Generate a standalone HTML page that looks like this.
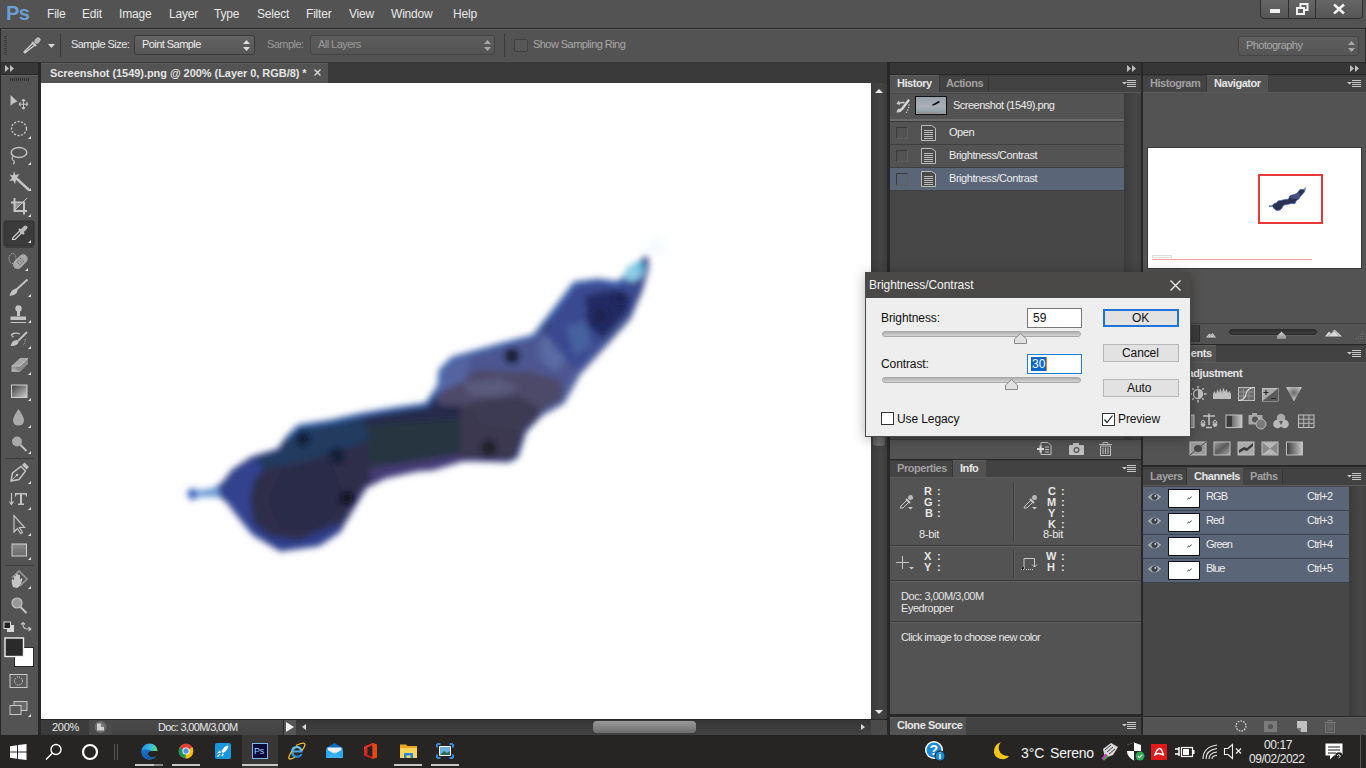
<!DOCTYPE html>
<html><head><meta charset="utf-8">
<style>
*{margin:0;padding:0;box-sizing:border-box}
html,body{width:1366px;height:768px;overflow:hidden;background:#535353;font-family:"Liberation Sans",sans-serif}
.a{position:absolute}
.t{position:absolute;white-space:nowrap;line-height:1;font-size:11px;color:#e4e4e4;letter-spacing:-0.55px}
.ic{position:absolute;overflow:visible}
</style></head><body>

<!-- MENU BAR -->
<div class="a" style="left:0;top:0;width:1366px;height:28px;background:#535353"></div>
<div class="t" style="left:6px;top:3px;font-size:20px;font-weight:bold;color:#6a9fd4;letter-spacing:-0.5px">Ps</div>
<div class="t" style="left:47px;top:8px;font-size:12px;color:#e8e8e8;letter-spacing:-0.2px">File</div>
<div class="t" style="left:82px;top:8px;font-size:12px;color:#e8e8e8;letter-spacing:-0.2px">Edit</div>
<div class="t" style="left:119px;top:8px;font-size:12px;color:#e8e8e8;letter-spacing:-0.2px">Image</div>
<div class="t" style="left:169px;top:8px;font-size:12px;color:#e8e8e8;letter-spacing:-0.2px">Layer</div>
<div class="t" style="left:214px;top:8px;font-size:12px;color:#e8e8e8;letter-spacing:-0.2px">Type</div>
<div class="t" style="left:257px;top:8px;font-size:12px;color:#e8e8e8;letter-spacing:-0.2px">Select</div>
<div class="t" style="left:306px;top:8px;font-size:12px;color:#e8e8e8;letter-spacing:-0.2px">Filter</div>
<div class="t" style="left:349px;top:8px;font-size:12px;color:#e8e8e8;letter-spacing:-0.2px">View</div>
<div class="t" style="left:391px;top:8px;font-size:12px;color:#e8e8e8;letter-spacing:-0.2px">Window</div>
<div class="t" style="left:453px;top:8px;font-size:12px;color:#e8e8e8;letter-spacing:-0.2px">Help</div>
<!-- window controls -->
<div class="a" style="left:1260px;top:-2px;width:103px;height:21px;border:1px solid #2e2e2e;border-radius:0 0 4px 4px;background:linear-gradient(#666,#565656)"></div>
<div class="a" style="left:1288px;top:0;width:1px;height:18px;background:#2e2e2e"></div>
<div class="a" style="left:1315px;top:0;width:1px;height:18px;background:#2e2e2e"></div>
<div class="a" style="left:1270px;top:9px;width:10px;height:4px;background:#f0f0f0"></div>
<svg class="ic" style="left:1296px;top:3px" width="13" height="12"><rect x="4.5" y="1" width="7" height="6" fill="none" stroke="#f0f0f0" stroke-width="2"/><rect x="1" y="5" width="7" height="6" fill="#5e5e5e" stroke="#f0f0f0" stroke-width="2"/></svg>
<svg class="ic" style="left:1333px;top:4px" width="12" height="10"><path d="M1 0.5L11 9.5M11 0.5L1 9.5" stroke="#f0f0f0" stroke-width="2.4"/></svg>

<!-- OPTIONS BAR -->
<div class="a" style="left:0;top:28px;width:1366px;height:1px;background:#2a2a2a"></div>
<div class="a" style="left:1px;top:29px;width:1364px;height:33px;background:#535353;border-top:1px solid #5e5e5e"></div>
<div class="a" style="left:0;top:62px;width:1366px;height:1px;background:#2a2a2a"></div>
<div class="a" style="left:0;top:28px;width:1px;height:35px;background:#2a2a2a"></div><div class="a" style="left:1365px;top:28px;width:1px;height:35px;background:#2a2a2a"></div>
<!-- grip -->
<div class="a" style="left:4px;top:36px;width:3px;height:20px;background:repeating-linear-gradient(#3a3a3a 0 1px,transparent 1px 2px)"></div>
<!-- eyedropper icon -->
<svg class="ic" style="left:22px;top:35px" width="20" height="20"><path d="M4 17 L3 18 L2 17 L3 16 L11 8 L13 10 Z" fill="none" stroke="#d8d8d8" stroke-width="1.2"/><path d="M10 7 L14 11" stroke="#c8c8c8" stroke-width="2.2"/><rect x="13" y="2" width="5" height="7" rx="2.5" transform="rotate(45 15.5 5.5)" fill="#b8b8b8"/></svg>
<svg class="ic" style="left:48px;top:44px" width="7" height="4"><path d="M0 0H7L3.5 4Z" fill="#d8d8d8"/></svg>
<div class="a" style="left:60px;top:34px;width:1px;height:23px;background:#3a3a3a"></div>
<div class="t" style="left:71px;top:39px;color:#e8e8e8">Sample Size:</div>
<div class="a" style="left:134px;top:35px;width:121px;height:20px;border:1px solid #3a3a3a;border-radius:3px;background:linear-gradient(#636363,#565656)"></div>
<div class="t" style="left:142px;top:39px;color:#ececec">Point Sample</div>
<svg class="ic" style="left:243px;top:40px" width="7" height="11"><path d="M0 4L3.5 0L7 4ZM0 7L3.5 11L7 7Z" fill="#dcdcdc"/></svg>
<div class="t" style="left:267px;top:39px;color:#9a9a9a">Sample:</div>
<div class="a" style="left:310px;top:35px;width:185px;height:20px;border:1px solid #444;border-radius:3px;background:linear-gradient(#5c5c5c,#545454)"></div>
<div class="t" style="left:318px;top:39px;color:#9a9a9a">All Layers</div>
<svg class="ic" style="left:484px;top:40px" width="7" height="11"><path d="M0 4L3.5 0L7 4ZM0 7L3.5 11L7 7Z" fill="#a8a8a8"/></svg>
<div class="a" style="left:504px;top:34px;width:1px;height:23px;background:#3a3a3a"></div>
<div class="a" style="left:514px;top:39px;width:14px;height:13px;border:1px solid #404040;border-radius:2px;background:#575757"></div>
<div class="t" style="left:533px;top:39px;color:#a8a8a8">Show Sampling Ring</div>
<div class="a" style="left:1238px;top:36px;width:121px;height:20px;border:1px solid #464646;border-radius:3px;background:linear-gradient(#5e5e5e,#555)"></div>
<div class="t" style="left:1246px;top:40px;color:#a8a8a8">Photography</div>
<svg class="ic" style="left:1348px;top:41px" width="7" height="11"><path d="M0 4L3.5 0L7 4ZM0 7L3.5 11L7 7Z" fill="#a8a8a8"/></svg>


<!-- TOOLBAR -->
<div class="a" style="left:0;top:62px;width:41px;height:674px;background:#282828"></div>
<div class="a" style="left:1px;top:63px;width:37px;height:11px;background:#383838"></div>
<svg class="ic" style="left:5px;top:65px" width="10" height="7"><path d="M0 0L4 3.5L0 7ZM5 0L9 3.5L5 7Z" fill="#c0c0c0"/></svg>
<div class="a" style="left:1px;top:75px;width:37px;height:660px;background:#535353;border-top:1px solid #5f5f5f"></div>
<div class="a" style="left:10px;top:78px;width:19px;height:3px;background:repeating-linear-gradient(90deg,#2f2f2f 0 1px,transparent 1px 2px)"></div>
<svg class="ic" style="left:0;top:0" width="41" height="736">
<!-- move -->
<path d="M10.5 95V106L13 103.5L17.5 101.5Z" fill="#c4c4c4"/>
<path d="M23.5 99.5V109M19 104.2H28M23.5 99.5L21.8 101.2M23.5 99.5L25.2 101.2M23.5 109L21.8 107.3M23.5 109L25.2 107.3M19 104.2L20.7 102.5M19 104.2L20.7 105.9M28 104.2L26.3 102.5M28 104.2L26.3 105.9" stroke="#c4c4c4" stroke-width="1.1" fill="none"/>
<!-- marquee -->
<ellipse cx="19" cy="128.5" rx="7.5" ry="7" fill="none" stroke="#c4c4c4" stroke-width="1.3" stroke-dasharray="2.2 1.4"/>
<path d="M31 136V139H28Z" fill="#e0e0e0"/>
<!-- lasso -->
<ellipse cx="19" cy="152.5" rx="7.8" ry="5" fill="none" stroke="#c4c4c4" stroke-width="1.4"/>
<path d="M13 156Q11 160 14 161Q15 163 13 164" stroke="#c4c4c4" stroke-width="1.2" fill="none"/>
<path d="M31 162V165H28Z" fill="#e0e0e0"/>
<!-- magic wand -->
<path d="M17 179L29 190" stroke="#c4c4c4" stroke-width="2.4"/>
<path d="M14 171L15.5 175L19.5 174L17 177.5L20 180L16 180L15 184L13 180.5L9 181L12 178L9.5 174.5L13 175.5Z" fill="#c4c4c4"/>
<path d="M31 188V191H28Z" fill="#e0e0e0"/>
<!-- crop -->
<path d="M14.5 198V211H27M11 202.5H24V214.5" stroke="#c4c4c4" stroke-width="2" fill="none"/>
<path d="M14 211L27 198" stroke="#c4c4c4" stroke-width="1"/>
<path d="M15 210V204H21Z" fill="#c4c4c4" opacity="0.6"/>
<path d="M31 214V217H28Z" fill="#e0e0e0"/>
<!-- eyedropper selected -->
<rect x="4" y="221" width="30" height="25" rx="2" fill="#3b3b3b" stroke="#2f2f2f"/>
<path d="M12.5 239.5L13 237.5L20 230.5L22 232.5L15 239.5Z" fill="none" stroke="#d4d4d4" stroke-width="1.2"/>
<path d="M19 229L24 234" stroke="#c8c8c8" stroke-width="2.2"/>
<path d="M21.5 231.5L25.5 227.5" stroke="#b8b8b8" stroke-width="4" stroke-linecap="round"/>
<path d="M31 240V243H28Z" fill="#e0e0e0"/>
<rect x="5" y="247" width="29" height="1" fill="#3c3c3c"/>
<!-- healing -->
<g transform="rotate(-45 20 262)"><rect x="12" y="257.5" width="17" height="9" rx="4.5" fill="#a8a8a8"/><path d="M18 259.5V264.5M20.5 259.5V264.5M23 259.5V264.5" stroke="#5a5a5a" stroke-width="1" stroke-dasharray="1 1"/></g>
<ellipse cx="12.5" cy="258.5" rx="3.5" ry="5" fill="none" stroke="#c4c4c4" stroke-width="1" stroke-dasharray="1 1"/>
<path d="M28 268V271H25Z" fill="#e0e0e0"/>
<!-- brush -->
<path d="M27.5 279.5L16 290" stroke="#c4c4c4" stroke-width="1.8"/>
<path d="M9.5 296Q11 289 16 288.5L17.5 290.5Q17 295 9.5 296Z" fill="#c4c4c4"/>
<path d="M31 294V297H28Z" fill="#e0e0e0"/>
<!-- stamp -->
<circle cx="18.5" cy="308.5" r="3.2" fill="#c4c4c4"/>
<path d="M17 311H20V316H17Z" fill="#c4c4c4"/>
<path d="M10.5 316.5H26V320H10.5Z" fill="#c4c4c4"/>
<path d="M10.5 322.5H26" stroke="#c4c4c4" stroke-width="1"/>
<path d="M31 320V323H28Z" fill="#e0e0e0"/>
<!-- history brush -->
<path d="M27 332L18 341" stroke="#c4c4c4" stroke-width="1.8"/>
<path d="M10.5 346Q12 340 17 340L18.5 342Q18 346 10.5 346Z" fill="#c4c4c4"/>
<path d="M11 335Q15 332 20 334M11 335L14 333M11 335L13.5 337" stroke="#c4c4c4" stroke-width="1.2" fill="none"/>
<path d="M25 339Q26 342 23 345" stroke="#c4c4c4" stroke-width="1" stroke-dasharray="1 1" fill="none"/>
<path d="M31 346V349H28Z" fill="#e0e0e0"/>
<!-- eraser -->
<path d="M11.5 366L20 358H28L20 366V372H11.5Z" fill="#a8a8a8"/>
<path d="M11.5 366H20L28 358V364L20 372" fill="#8a8a8a"/>
<path d="M12 366H20L28 358" stroke="#d0d0d0" stroke-width="0.8" fill="none"/>
<path d="M31 372V375H28Z" fill="#e0e0e0"/>
<!-- gradient -->
<defs><linearGradient id="tg" x1="0" y1="0" x2="1" y2="1"><stop offset="0" stop-color="#3a3a3a"/><stop offset="1" stop-color="#d0d0d0"/></linearGradient>
<linearGradient id="tr" x1="0" y1="0" x2="0" y2="1"><stop offset="0" stop-color="#9a9a9a"/><stop offset="1" stop-color="#6a6a6a"/></linearGradient></defs>
<rect x="11.5" y="385" width="15.5" height="12.5" fill="url(#tg)" stroke="#d0d0d0" stroke-width="1"/>
<path d="M31 398V401H28Z" fill="#e0e0e0"/>
<!-- blur drop -->
<path d="M18.5 409Q13 417 13 420Q13 425.5 18.5 425.5Q24 425.5 24 420Q24 417 18.5 409Z" fill="#aaa"/>
<path d="M31 425V428H28Z" fill="#e0e0e0"/>
<!-- dodge -->
<circle cx="17" cy="441.5" r="5" fill="#a8a8a8"/>
<path d="M20.5 445L26.5 451" stroke="#c4c4c4" stroke-width="1.8"/>
<path d="M31 451V454H28Z" fill="#e0e0e0"/>
<rect x="5" y="458" width="29" height="1" fill="#3c3c3c"/>
<!-- pen -->
<path d="M11 481L12.5 473L21 466.5L25.5 471L19 479.5Z" fill="none" stroke="#c4c4c4" stroke-width="1.4"/>
<path d="M22 465L24.5 462.5L29 467L26.5 469.5Z" fill="#c4c4c4"/>
<circle cx="17" cy="475" r="1.3" fill="#c4c4c4"/>
<path d="M11 481L17 475" stroke="#c4c4c4" stroke-width="0.9"/>
<path d="M31 481V484H28Z" fill="#e0e0e0"/>
<!-- type -->
<path d="M11.5 493V504M9.5 501.5L11.5 504.5L13.5 501.5" stroke="#c4c4c4" stroke-width="1.1" fill="none"/>
<path d="M15 493H27V496.5H26L25.5 494.5H22V503.5H24V505H18V503.5H20V494.5H16.5L16 496.5H15Z" fill="#c4c4c4"/>
<path d="M31 507V510H28Z" fill="#e0e0e0"/>
<!-- path selection -->
<path d="M14 515.5V532L17.5 528.5L20.5 533.5L22.5 532.5L19.5 527.5H24.5Z" fill="none" stroke="#c4c4c4" stroke-width="1.2"/>
<path d="M31 533V536H28Z" fill="#e0e0e0"/>
<!-- rectangle -->
<defs><linearGradient id="rr" x1="0" y1="0" x2="0" y2="1"><stop offset="0" stop-color="#8a8a8a"/><stop offset="1" stop-color="#6a6a6a"/></linearGradient></defs>
<rect x="12" y="544" width="14.5" height="12" fill="url(#rr)" stroke="#cfcfcf" stroke-width="1"/>
<path d="M31 557V560H28Z" fill="#e0e0e0"/>
<rect x="5" y="565" width="29" height="1" fill="#3c3c3c"/>
<!-- hand rotate -->
<path d="M12 578L19 571L27 579L20 586" fill="none" stroke="#999" stroke-width="1.6"/>
<path d="M13 587Q11 582 12 579L14 580V576.5Q15 575 16 576.5V580V574.5Q17 573 18 574.5V579.5V575Q19 574 20 575V580L21 578Q23 578 22 581Q20 587 17 588Z" fill="#c4c4c4"/>
<path d="M31 586V589H28Z" fill="#e0e0e0"/>
<!-- zoom -->
<circle cx="17" cy="603" r="5" fill="#999" stroke="#c4c4c4" stroke-width="1.2"/>
<path d="M20.5 607L26.5 613" stroke="#c4c4c4" stroke-width="2"/>
<!-- default colors -->
<rect x="7" y="625" width="7" height="7" fill="#d8d8d8"/>
<rect x="4" y="622" width="6.5" height="6.5" fill="#222" stroke="#d8d8d8" stroke-width="1"/>
<path d="M23 622.5V625Q23 629 28.5 629H31M28.5 627L31 629L28.5 631M23 622.5L21 624.5M23 622.5L25 624.5" stroke="#c4c4c4" stroke-width="1.1" fill="none"/>
<!-- fg/bg -->
<rect x="14.5" y="647.5" width="19" height="19" fill="#fff" stroke="#2a2a2a" stroke-width="1"/>
<rect x="5" y="638" width="18.5" height="18.5" fill="#2a2a2a" stroke="#f0f0f0" stroke-width="1.4"/>
<!-- quick mask -->
<rect x="10" y="674.5" width="17" height="13" fill="#5a5a5a" stroke="#c8c8c8" stroke-width="1"/>
<circle cx="18.5" cy="681" r="4" fill="none" stroke="#e8e8e8" stroke-width="1" stroke-dasharray="1 1.1"/>
<!-- screen mode -->
<rect x="14" y="701.5" width="13" height="9" fill="#6a6a6a" stroke="#c8c8c8" stroke-width="1"/>
<rect x="10" y="705.5" width="11" height="9" fill="#5a5a5a" stroke="#c8c8c8" stroke-width="1"/>
<path d="M31 714V717H28Z" fill="#e0e0e0"/>
</svg>

<!-- DOCUMENT AREA -->
<div class="a" style="left:41px;top:62px;width:846px;height:21px;background:#3a3a3a"></div>
<div class="a" style="left:41px;top:63px;width:287px;height:20px;background:#535353;border-top:1px solid #5e5e5e"></div>
<div class="t" style="left:50px;top:68px;font-weight:bold;color:#e4e4e4;letter-spacing:-0.05px">Screenshot (1549).png @ 200% (Layer 0, RGB/8) *</div>
<svg class="ic" style="left:314px;top:69px" width="7" height="7"><path d="M0.5 0.5L6.5 6.5M6.5 0.5L0.5 6.5" stroke="#d8d8d8" stroke-width="1.4"/></svg>
<div class="a" style="left:41px;top:83px;width:830px;height:636px;background:#fff"></div>
<svg class="ic" style="left:0;top:0" width="887" height="719" viewBox="0 0 887 719">
<defs>
<filter id="bl" x="-20%" y="-20%" width="140%" height="140%"><feGaussianBlur stdDeviation="3"/></filter>
<filter id="bl2" x="-50%" y="-50%" width="200%" height="200%"><feGaussianBlur stdDeviation="3"/></filter>
<filter id="bl3" x="-50%" y="-50%" width="200%" height="200%"><feGaussianBlur stdDeviation="6"/></filter>
<clipPath id="cv"><rect x="41" y="83" width="830" height="636"/></clipPath>
<clipPath id="ol"><path d="M214 491 L224 484 L234 471 L252 459 L279 451 L289 437 L299 427 L331 422 L363 415 L393 410 L427 405 L440 386 L441 371 L453 359 L503 345 L534 337 L556 309 L575 284 L598 281 L619 284 L631 271 L641 263 L646 259 L646 268 L640 290 L628 318 L610 338 L578 373 L562 402 L540 414 L524 431 L516 456 L508 460 L478 459 L462 459 L432 468 L417 469 L385 476 L365 486 L348 514 L338 531 L318 544 L281 549 L254 533 L244 521 L227 499 Z"/></clipPath>
</defs>
<g clip-path="url(#cv)">
<g filter="url(#bl)">
<path d="M214 491 L224 484 L234 471 L252 459 L279 451 L289 437 L299 427 L331 422 L363 415 L393 410 L427 405 L440 386 L441 371 L453 359 L503 345 L534 337 L556 309 L575 284 L598 281 L619 284 L631 271 L641 263 L646 259 L646 268 L640 290 L628 318 L610 338 L578 373 L562 402 L540 414 L524 431 L516 456 L508 460 L478 459 L462 459 L432 468 L417 469 L385 476 L365 486 L348 514 L338 531 L318 544 L281 549 L254 533 L244 521 L227 499 Z" fill="#34407a" stroke="#364488" stroke-width="5" stroke-linejoin="round"/>
<path d="M214 491 L224 484 L234 471 L252 459 L279 451 L289 437 L299 427 L331 422 L363 415 L393 410 L427 405 L440 386 L441 371 L453 359 L503 345 L534 337 L556 309 L575 284 L598 281 L619 284 L631 271 L641 263 L646 259 L646 268 L640 290 L628 318 L610 338 L578 373 L562 402 L540 414 L524 431 L516 456 L508 460 L478 459 L462 459 L432 468 L417 469 L385 476 L365 486 L348 514 L338 531 L318 544 L281 549 L254 533 L244 521 L227 499 Z" fill="#2f2d4b"/>
<g clip-path="url(#ol)">
<!-- left fringe of lower lobe -->
<path d="M205 495 L234 466 L262 452 L290 446 L292 456 L266 466 L254 480 L250 500 L254 525 L240 525 Z" fill="#31438e"/>
<!-- lower-left lobe: teal upper portion -->
<path d="M254 458 L280 447 L292 430 L336 418 L368 410 L370 440 L336 452 L300 462 L264 468 Z" fill="#213b5e"/>
<path d="M250 520 L270 536 L300 540 L340 522 L330 560 L260 560 L236 530 Z" fill="#2d3d86"/>
<path d="M282 470 L330 460 L346 500 L320 530 L280 530 L268 500 Z" fill="#2c2b48"/>
<!-- middle band -->
<path d="M364 400 L462 396 L464 460 L372 478 Z" fill="#283640"/>
<path d="M364 404 L462 398 L462 418 L364 425 Z" fill="#262b4b"/>
<path d="M370 468 L462 454 L470 470 L372 490 Z" fill="#443a72"/>
<!-- right of middle -->
<path d="M460 398 L550 398 L548 410 L530 420 L520 440 L516 470 L460 470 Z" fill="#3b3850"/>
<!-- upper band -->
<path d="M436 395 L440 360 L500 340 L540 330 L572 336 L580 372 L566 402 L546 414 L500 405 L440 405 Z" fill="#4d5690"/>
<path d="M440 388 L480 370 L530 372 L560 380 L566 402 L546 414 L500 405 L440 405 Z" fill="#4e4868"/>
<path d="M462 382 L500 378 L520 388 L500 396 L470 396 Z" fill="#5a5a7c"/>
<path d="M440 366 L470 354 L466 380 L440 392 Z" fill="#5563a0"/>
<path d="M540 340 L560 330 L572 352 L556 372 L540 360 Z" fill="#5a6aa2"/>
<path d="M470 402 L520 396 L546 412 L524 432 L480 424 Z" fill="#3e3a52"/>
<!-- upper right lobe -->
<path d="M550 320 L575 280 L620 280 L650 255 L650 300 L628 318 L600 344 L578 372 L560 352 L545 334 Z" fill="#3a4890"/>
<path d="M585 296 L612 290 L630 296 L626 322 L604 340 L588 326 Z" fill="#232a62"/>
<path d="M566 326 L586 322 L592 346 L574 356 Z" fill="#46609e"/>
</g>
<!-- fringe strokes -->
<path d="M289 437 L299 427 L331 422 L363 415 L393 410 L427 405 L440 386 L441 371 L453 359 L503 345 L534 337 L556 309 L575 284 L598 281 L619 284 L631 271" fill="none" stroke="#3a72c0" stroke-width="2.5"/>
<path d="M628 315 L603 343 L575 374 L562 402 L540 414" fill="none" stroke="#5a74b8" stroke-width="2"/>
<path d="M227 499 L244 521 L254 533 L281 549 L318 544 L338 531" fill="none" stroke="#304a9c" stroke-width="2.5"/>
<path d="M348 514 L365 486 L385 476 L417 469 L432 468 L462 459 L478 459 L508 460" fill="none" stroke="#4a3c7a" stroke-width="2"/>
<circle cx="193" cy="494" r="5.5" fill="#3a5cb8"/>
<path d="M196 491 L218 487 L220 497 L196 497 Z" fill="#6a9ad8"/>
<!-- tip -->
<ellipse cx="634" cy="272" rx="11" ry="8" transform="rotate(-40 634 272)" fill="#8ccde6"/>
<ellipse cx="640" cy="266" rx="4.5" ry="4" fill="#58b4e0"/>
</g>
<g filter="url(#bl2)">
<circle cx="303" cy="439" r="6" fill="#0c1830"/>
<circle cx="337" cy="456" r="7" fill="#101a34"/>
<circle cx="347" cy="498" r="6" fill="#0a0a1c"/>
<circle cx="512" cy="356" r="7" fill="#181c30"/>
<circle cx="489" cy="448" r="7" fill="#1c1c28"/>
<circle cx="600" cy="316" r="7" fill="#1a2050"/>
<circle cx="620" cy="298" r="5" fill="#1a2050"/>
</g>
<g filter="url(#bl3)">
<ellipse cx="656" cy="246" rx="9" ry="4" transform="rotate(-45 656 246)" fill="#c8e8f4" opacity="0.45"/>
</g>
</g>
</svg>
<!-- vertical scrollbar -->
<div class="a" style="left:871px;top:83px;width:16px;height:636px;background:linear-gradient(90deg,#3a3a3a,#454545 60%,#3c3c3c)"></div>
<svg class="ic" style="left:875px;top:89px" width="8" height="4"><path d="M0 4L4 0L8 4Z" fill="#e8e8e8"/></svg>
<div class="a" style="left:873px;top:300px;width:12px;height:146px;border-radius:3px;background:linear-gradient(90deg,#5a5a5a,#707070 50%,#5e5e5e)"></div>
<svg class="ic" style="left:875px;top:710px" width="8" height="4"><path d="M0 0H8L4 4Z" fill="#e8e8e8"/></svg>
<!-- status bar -->
<div class="a" style="left:41px;top:719px;width:846px;height:16px;background:#262626"></div>
<div class="a" style="left:41px;top:720px;width:48px;height:15px;background:#3c3c3c"></div>
<div class="t" style="left:52px;top:722px;color:#e8e8e8;letter-spacing:-0.3px">200%</div>
<div class="a" style="left:89px;top:720px;width:23px;height:15px;background:#4a4a4a"></div>
<svg class="ic" style="left:94px;top:721px" width="13" height="12"><circle cx="6.5" cy="6" r="6" fill="#6a6a6a"/><path d="M3 2.5H7L10 6V9.5H3Z" fill="#d0d0d0"/><path d="M7 2.5V6H10" fill="#7a7a7a"/></svg>
<div class="a" style="left:112px;top:720px;width:171px;height:15px;background:linear-gradient(#4a4a4a,#424242)"></div>
<div class="t" style="left:158px;top:722px;color:#e8e8e8;letter-spacing:-0.65px">Doc: 3,00M/3,00M</div>
<div class="a" style="left:284px;top:720px;width:12px;height:15px;background:#565656"></div>
<svg class="ic" style="left:286px;top:722px" width="8" height="10"><path d="M0 0L8 5L0 10Z" fill="#f0f0f0"/></svg>
<div class="a" style="left:296px;top:720px;width:575px;height:15px;background:linear-gradient(#363636,#424242)"></div>
<svg class="ic" style="left:302px;top:724px" width="4" height="6"><path d="M4 0V6L0 3Z" fill="#d8d8d8"/></svg>
<div class="a" style="left:593px;top:721px;width:103px;height:12px;border-radius:4px;background:linear-gradient(#9a9a9a,#6c6c6c)"></div>
<svg class="ic" style="left:861px;top:724px" width="4" height="6"><path d="M0 0V6L4 3Z" fill="#d8d8d8"/></svg>
<div class="a" style="left:871px;top:720px;width:16px;height:15px;background:#4a4a4a"></div>
<div class="a" style="left:887px;top:62px;width:3px;height:674px;background:#282828"></div>


<!-- RIGHT COLUMN 1 -->
<div class="a" style="left:890px;top:62px;width:476px;height:674px;background:#282828"></div>
<div class="a" style="left:890px;top:63px;width:251px;height:11px;background:#363636"></div>
<svg class="ic" style="left:1127px;top:65px" width="10" height="7"><path d="M0 0L4 3.5L0 7ZM5 0L9 3.5L5 7Z" fill="#bdbdbd"/></svg>
<div class="a" style="left:1143px;top:63px;width:223px;height:11px;background:#363636"></div>
<svg class="ic" style="left:1350px;top:65px" width="10" height="7"><path d="M0 0L4 3.5L0 7ZM5 0L9 3.5L5 7Z" fill="#bdbdbd"/></svg>
<!-- History panel -->
<div class="a" style="left:890px;top:75px;width:251px;height:364px;background:#535353"></div>
<div class="a" style="left:890px;top:75px;width:251px;height:17px;background:#424242;border-top:1px solid #3a3a3a"></div>
<div class="a" style="left:890px;top:75px;width:49px;height:18px;background:#535353;border-top:1px solid #5e5e5e"></div>
<div class="a" style="left:939px;top:76px;width:50px;height:16px;background:#424242;border-right:1px solid #363636;border-left:1px solid #363636"></div>
<div class="t" style="left:897px;top:78px;font-weight:bold;color:#e6e6e6;letter-spacing:-0.45px">History</div>
<div class="t" style="left:946px;top:78px;font-weight:bold;color:#a0a0a0;letter-spacing:-0.45px">Actions</div>
<svg class="ic" style="left:1122px;top:80px" width="14" height="8"><path d="M0 2H5L2.5 4.5Z" fill="#c8c8c8"/><path d="M5 0.5H14M5 2.5H14M5 4.5H14M5 6.5H14" stroke="#c8c8c8" stroke-width="1"/></svg>
<div class="a" style="left:890px;top:92px;width:251px;height:1px;background:#5a5a5a"></div>
<div class="a" style="left:890px;top:93px;width:234px;height:346px;background:#474747"></div>
<div class="a" style="left:1124px;top:93px;width:17px;height:346px;background:linear-gradient(90deg,#3c3c3c,#474747 70%,#424242)"></div>
<!-- snapshot row -->
<div class="a" style="left:890px;top:94px;width:234px;height:25px;background:#535353"></div>
<svg class="ic" style="left:895px;top:99px" width="16" height="15"><path d="M1.5 4.5L4 1.5L4.5 3.5Q7 2.5 10 3L9 4.5Q6.5 4 4.5 5L5 6.5Z" fill="#d0d0d0"/><path d="M13.5 1.5L7 10" stroke="#d8d8d8" stroke-width="2.4" stroke-linecap="round"/><path d="M1.5 13.5Q2 9 6 9.5L7.5 11Q6 14 1.5 13.5Z" fill="#d0d0d0"/><circle cx="14" cy="6" r="0.7" fill="#ddd"/><circle cx="13.7" cy="8.5" r="0.7" fill="#ddd"/><circle cx="12.8" cy="11" r="0.7" fill="#ddd"/><circle cx="11.5" cy="13.3" r="0.7" fill="#ddd"/></svg>
<div class="a" style="left:915px;top:96px;width:32px;height:19px;border:1px solid #111;background:linear-gradient(#98a2aa,#a8b0b6 55%,#8c9aa2)"></div>
<div class="a" style="left:917px;top:112px;width:22px;height:1px;background:#a08c8c"></div>
<svg class="ic" style="left:932px;top:101px" width="8" height="5"><path d="M0.5 4L3 3L7.5 0.5" stroke="#101018" stroke-width="1.8" fill="none"/></svg>
<div class="t" style="left:953px;top:100px;color:#ececec;letter-spacing:-0.5px">Screenshot (1549).png</div>
<div class="a" style="left:890px;top:119px;width:234px;height:2px;background:#6a6a6a"></div>
<div class="a" style="left:890px;top:121px;width:234px;height:1px;background:#3c3c3c"></div>
<div class="a" style="left:890px;top:122px;width:234px;height:22px;background:#535353"></div><div class="a" style="left:890px;top:144px;width:234px;height:1px;background:#3f3f3f"></div><div class="a" style="left:896px;top:127px;width:12px;height:12px;border:1px solid #3a3a3a;border-right-color:#5f5f5f;border-bottom-color:#5f5f5f;background:transparent"></div><svg class="ic" style="left:921px;top:125px" width="15" height="16"><path d="M0.5 0.5H10.5L14.5 3V15.5H0.5Z" fill="#4a4a4a" stroke="#bcbcbc"/><path d="M3 5.5H12M3 7.5H12M3 9.5H12M3 11.5H12M3 13.5H12" stroke="#bcbcbc"/></svg><div class="t" style="left:949px;top:127px;color:#ececec;letter-spacing:-0.45px">Open</div><div class="a" style="left:890px;top:145px;width:234px;height:22px;background:#535353"></div><div class="a" style="left:890px;top:167px;width:234px;height:1px;background:#3f3f3f"></div><div class="a" style="left:896px;top:150px;width:12px;height:12px;border:1px solid #3a3a3a;border-right-color:#5f5f5f;border-bottom-color:#5f5f5f;background:transparent"></div><svg class="ic" style="left:921px;top:148px" width="15" height="16"><path d="M0.5 0.5H10.5L14.5 3V15.5H0.5Z" fill="#4a4a4a" stroke="#bcbcbc"/><path d="M3 5.5H12M3 7.5H12M3 9.5H12M3 11.5H12M3 13.5H12" stroke="#bcbcbc"/></svg><div class="t" style="left:949px;top:150px;color:#ececec;letter-spacing:-0.45px">Brightness/Contrast</div><div class="a" style="left:890px;top:168px;width:234px;height:22px;background:#5a6678"></div><div class="a" style="left:890px;top:190px;width:234px;height:1px;background:#3f3f3f"></div><div class="a" style="left:896px;top:173px;width:12px;height:12px;border:1px solid #3a3a3a;border-right-color:#5f5f5f;border-bottom-color:#5f5f5f;background:transparent"></div><svg class="ic" style="left:921px;top:171px" width="15" height="16"><path d="M0.5 0.5H10.5L14.5 3V15.5H0.5Z" fill="#4a4a4a" stroke="#bcbcbc"/><path d="M3 5.5H12M3 7.5H12M3 9.5H12M3 11.5H12M3 13.5H12" stroke="#bcbcbc"/></svg><div class="t" style="left:949px;top:173px;color:#ececec;letter-spacing:-0.45px">Brightness/Contrast</div>
<!-- history bottom bar -->
<div class="a" style="left:890px;top:439px;width:251px;height:20px;background:#535353;border-top:1px solid #3a3a3a"></div>
<svg class="ic" style="left:1037px;top:442px" width="15" height="13"><path d="M4 0.5H11L14 3.5V12.5H4Z" fill="none" stroke="#c0c0c0"/><path d="M0 7H7M3.5 3.5V10.5" stroke="#d8d8d8" stroke-width="2"/><path d="M8 5H12M8 7.5H12M8 10H12" stroke="#c0c0c0"/></svg>
<svg class="ic" style="left:1069px;top:443px" width="15" height="12"><rect x="0" y="2" width="15" height="10" rx="1" fill="#c0c0c0"/><rect x="4" y="0" width="6" height="3" fill="#c0c0c0"/><circle cx="7.5" cy="7" r="3" fill="#535353"/><circle cx="7.5" cy="7" r="1.8" fill="#c0c0c0"/></svg>
<svg class="ic" style="left:1099px;top:442px" width="13" height="14"><path d="M0 2.5H13M4 2.5V0.5H9V2.5" stroke="#c0c0c0" fill="none"/><path d="M1.5 4H11.5V13.5H1.5Z" fill="none" stroke="#c0c0c0"/><path d="M4 5.5V12M6.5 5.5V12M9 5.5V12" stroke="#c0c0c0"/></svg>


<!-- NAVIGATOR -->
<div class="a" style="left:1143px;top:75px;width:223px;height:269px;background:#535353"></div>
<div class="a" style="left:1143px;top:75px;width:223px;height:17px;background:#424242;border-top:1px solid #3a3a3a"></div><div class="a" style="left:1143px;top:76px;width:64px;height:16px;background:#444;border-right:1px solid #363636"></div><div class="t" style="left:1150px;top:78px;font-weight:bold;color:#a0a0a0;letter-spacing:-0.45px">Histogram</div><div class="a" style="left:1207px;top:75px;width:61px;height:18px;background:#535353;border-top:1px solid #5e5e5e"></div><div class="t" style="left:1214px;top:78px;font-weight:bold;color:#e6e6e6;letter-spacing:-0.45px">Navigator</div><div class="a" style="left:1143px;top:92px;width:223px;height:1px;background:#5a5a5a"></div><svg class="ic" style="left:1347px;top:80px" width="14" height="8"><path d="M0 2H5L2.5 4.5Z" fill="#c8c8c8"/><path d="M5 0.5H14M5 2.5H14M5 4.5H14M5 6.5H14" stroke="#c8c8c8" stroke-width="1"/></svg>
<div class="a" style="left:1147px;top:147px;width:215px;height:122px;background:#3a3a3a"></div>
<div class="a" style="left:1148px;top:148px;width:213px;height:120px;background:#fff"></div>
<div class="a" style="left:1258px;top:174px;width:65px;height:50px;border:2px solid #e8383a"></div>
<div class="a" style="left:1152px;top:259px;width:160px;height:1px;background:#f3a0a0"></div>
<div class="a" style="left:1152px;top:255px;width:20px;height:3px;border:1px solid #ddd"></div>
<svg class="ic" style="left:1148px;top:148px" width="213" height="120"><defs><filter id="nbf" x="-20%" y="-20%" width="140%" height="140%"><feGaussianBlur stdDeviation="0.5"/></filter></defs><g transform="translate(-1148,-148)"><g filter="url(#nbf)"><g transform="translate(1258,174) scale(0.0783) translate(-41,-83)">
<path d="M214 491 L224 484 L234 471 L252 459 L279 451 L289 437 L299 427 L331 422 L363 415 L393 410 L427 405 L440 386 L441 371 L453 359 L503 345 L534 337 L556 309 L575 284 L598 281 L619 284 L631 271 L641 263 L646 259 L646 268 L640 290 L628 318 L610 338 L578 373 L562 402 L540 414 L524 431 L516 456 L508 460 L478 459 L462 459 L432 468 L417 469 L385 476 L365 486 L348 514 L338 531 L318 544 L281 549 L254 533 L244 521 L227 499 Z" fill="#2a3050" stroke="#3a5ab0" stroke-width="10"/>
<circle cx="193" cy="494" r="12" fill="#4a70c8"/>
<path d="M196 488 L222 484 L224 500 L196 500 Z" fill="#4a80d0"/>
<path d="M440 380 L556 320 L580 340 L562 400 L480 400Z" fill="#4a5080"/>
<path d="M626 276 L640 262 L650 255 L648 275 L634 288 Z" fill="#78c0e8"/>
</g></g></g></svg>
<div class="a" style="left:1143px;top:323px;width:223px;height:21px;background:#535353;border-top:1px solid #3e3e3e"></div>
<div class="a" style="left:1143px;top:325px;width:57px;height:17px;background:#3c3c3c;border-right:1px solid #2e2e2e"></div>
<svg class="ic" style="left:1206px;top:332px" width="10" height="6"><path d="M0 5.5L3.5 1.5L5 3L6.5 1L10 5.5Z" fill="#d8d8d8"/><path d="M2 5L3.5 3.3L5 4.5L6.5 2.8L8 5" stroke="#777" stroke-width="0.6" fill="none"/></svg>
<div class="a" style="left:1229px;top:329px;width:88px;height:6px;border-radius:3px;background:linear-gradient(#2e2e2e,#3e3e3e);border:1px solid #2a2a2a;box-shadow:0 1px 0 #5e5e5e"></div>
<svg class="ic" style="left:1276px;top:331px" width="11" height="9"><defs><linearGradient id="thg" x1="0" y1="0" x2="0" y2="1"><stop offset="0" stop-color="#d0d0d0"/><stop offset="1" stop-color="#8a8a8a"/></linearGradient></defs><path d="M5.5 0.5L10.5 5V7.5Q10.5 8.5 9.5 8.5H1.5Q0.5 8.5 0.5 7.5V5Z" fill="url(#thg)" stroke="#3a3a3a" stroke-width="0.6"/></svg>
<svg class="ic" style="left:1325px;top:329px" width="18" height="8"><path d="M0 7.5L4 2.5L6 4.5L9.5 0.5L17 7.5Z" fill="#d8d8d8"/><path d="M3 7L6 4.5L9.5 1.8L14 7" stroke="#888" stroke-width="0.7" fill="none"/></svg>
<svg class="ic" style="left:1354px;top:331px" width="10" height="10"><path d="M8.5 1V2M6.5 3V4M8.5 3V4M4.5 5V6M6.5 5V6M8.5 5V6M2.5 7V8M4.5 7V8M6.5 7V8M8.5 7V8" stroke="#6c6c6c" stroke-width="1"/></svg>

<!-- ADJUSTMENTS -->
<div class="a" style="left:1143px;top:345px;width:223px;height:120px;background:#535353"></div>
<div class="a" style="left:1143px;top:345px;width:223px;height:17px;background:#424242;border-top:1px solid #3a3a3a"></div><div class="a" style="left:1143px;top:345px;width:73px;height:18px;background:#535353;border-top:1px solid #5e5e5e"></div><div class="t" style="left:1150px;top:348px;font-weight:bold;color:#e6e6e6;letter-spacing:-0.45px">Adjustments</div><div class="a" style="left:1143px;top:362px;width:223px;height:1px;background:#5a5a5a"></div><svg class="ic" style="left:1347px;top:350px" width="14" height="8"><path d="M0 2H5L2.5 4.5Z" fill="#c8c8c8"/><path d="M5 0.5H14M5 2.5H14M5 4.5H14M5 6.5H14" stroke="#c8c8c8" stroke-width="1"/></svg>
<div class="t" style="left:1150px;top:368px;font-weight:bold;color:#e6e6e6;letter-spacing:-0.4px">Add an adjustment</div>
<svg class="ic" style="left:1143px;top:345px" width="223" height="120">
<defs>
<linearGradient id="ag1" x1="0" y1="0" x2="1" y2="0"><stop offset="0" stop-color="#3a3a3a"/><stop offset="1" stop-color="#c8c8c8"/></linearGradient>
<linearGradient id="ag2" x1="0" y1="0" x2="1" y2="1"><stop offset="0" stop-color="#9a9a9a"/><stop offset="0.5" stop-color="#5a5a5a"/><stop offset="1" stop-color="#aaa"/></linearGradient>
<radialGradient id="ag3" cx="0.5" cy="0.4" r="0.5"><stop offset="0" stop-color="#6a6a6a"/><stop offset="1" stop-color="#c0c0c0"/></radialGradient>
</defs>
<g transform="translate(-1143,-345)">
<!-- sun -->
<circle cx="1198" cy="394" r="4.5" fill="none" stroke="#c0c0c0" stroke-width="1.3"/>
<path d="M1198 394V389.5A4.5 4.5 0 0 1 1198 398.5Z" fill="#c0c0c0"/>
<path d="M1198 386V388M1198 400V402.5M1190 394H1192M1204 394H1206.5M1192.3 388.3L1193.7 389.7M1202.3 398.3L1203.7 399.7M1203.7 388.3L1202.3 389.7M1193.7 398.3L1192.3 399.7" stroke="#c0c0c0" stroke-width="1.5"/>
<!-- levels -->
<path d="M1213 399V394L1214.5 391L1216 394L1217.5 389L1219 393L1220.5 388L1222 393L1223.5 387.5L1225 392L1226.5 389L1228 393L1229.5 391L1231 394V399Z" fill="#c0c0c0"/>
<!-- curves -->
<rect x="1238.5" y="387.5" width="16" height="13" fill="#6a6a6a" stroke="#c0c0c0"/>
<path d="M1238.5 392H1254.5M1238.5 396H1254.5M1243.5 387.5V400.5M1249 387.5V400.5" stroke="#999" stroke-width="0.8"/>
<path d="M1238.5 400.5Q1245 400 1246 394Q1247 388 1254.5 387.5" stroke="#e0e0e0" stroke-width="1.2" fill="none"/>
<!-- exposure -->
<rect x="1262.5" y="388.5" width="15.5" height="12.5" fill="#a8a8a8" stroke="#c0c0c0"/>
<path d="M1262.5 401L1278 388.5V401Z" fill="#5a5a5a"/>
<path d="M1263.5 392.5H1268.5M1266 390V395M1271 398.5H1276" stroke="#2a2a2a" stroke-width="1.2"/>
<!-- vibrance -->
<path d="M1286 387H1302L1294 401.5Z" fill="url(#ag3)"/>
<!-- huesat partial -->
<rect x="1186" y="415" width="8" height="12.5" fill="#8a8a8a" stroke="#c0c0c0"/><path d="M1190 415V427.5" stroke="#c0c0c0"/>
<!-- balance -->
<path d="M1209 413.5V425M1203 416H1215M1206 427.5H1212" stroke="#c0c0c0" stroke-width="1.6"/>
<path d="M1201 423Q1203 417 1205 423ZM1213 423Q1215 417 1217 423Z" fill="none" stroke="#c0c0c0"/>
<path d="M1200.5 423.5H1205.5Q1205 427 1203 427Q1201 427 1200.5 423.5ZM1212.5 423.5H1217.5Q1217 427 1215 427Q1213 427 1212.5 423.5Z" fill="#c0c0c0"/>
<!-- b&w -->
<rect x="1226" y="415" width="16" height="12.5" fill="url(#ag1)" stroke="#c0c0c0"/>
<rect x="1227" y="416" width="5" height="10.5" fill="#3a3a3a"/>
<!-- photo filter -->
<rect x="1248.5" y="415" width="14" height="9.5" fill="#a8a8a8"/>
<rect x="1252" y="413" width="5" height="2.5" fill="#a8a8a8"/>
<circle cx="1255" cy="419.5" r="3" fill="#555"/>
<circle cx="1261" cy="424" r="5" fill="#7a7a7a" stroke="#b8b8b8" stroke-width="1"/>
<!-- channel mixer -->
<circle cx="1281" cy="418" r="4.3" fill="#a8a8a8"/>
<circle cx="1277.5" cy="424" r="4.3" fill="#b8b8b8"/>
<circle cx="1284.5" cy="424" r="4.3" fill="#b8b8b8"/>
<path d="M1279 421H1283L1281 425Z" fill="#5a5a5a"/>
<!-- lookup -->
<rect x="1298.5" y="415" width="15.5" height="12.5" fill="#5a5a5a" stroke="#c0c0c0"/>
<path d="M1298.5 419.2H1314M1298.5 423.3H1314M1303.7 415V427.5M1308.9 415V427.5" stroke="#c0c0c0" stroke-width="0.9"/>
<!-- invert -->
<rect x="1190" y="442" width="16" height="13" fill="#9a9a9a" stroke="#c0c0c0"/>
<path d="M1190 455L1206 442" stroke="#4a4a4a" stroke-width="1"/>
<ellipse cx="1198" cy="448.5" rx="4" ry="3.5" fill="#4a4a4a"/>
<!-- posterize -->
<rect x="1214" y="442" width="16" height="13" fill="url(#ag2)" stroke="#c0c0c0"/>
<!-- threshold -->
<rect x="1238" y="442" width="16" height="13" fill="#aaa" stroke="#c0c0c0"/>
<path d="M1239 450L1244 447L1247 448L1253 443V446L1247 451L1244 450L1239 453Z" fill="#3a3a3a"/>
<!-- selective color -->
<rect x="1262" y="442" width="16" height="13" fill="#8a8a8a" stroke="#c0c0c0"/>
<path d="M1262.5 442.5L1270 448.5L1277.5 442.5ZM1262.5 454.5L1270 448.5L1277.5 454.5Z" fill="#b8b8b8"/>
<!-- gradient map -->
<rect x="1286.5" y="442" width="16" height="13" fill="url(#ag1)" stroke="#c0c0c0"/>
</g>
</svg>

<!-- PROPERTIES / INFO -->
<div class="a" style="left:890px;top:460px;width:251px;height:254px;background:#535353"></div>
<div class="a" style="left:890px;top:460px;width:251px;height:17px;background:#424242;border-top:1px solid #3a3a3a"></div><div class="a" style="left:890px;top:461px;width:63px;height:16px;background:#444;border-right:1px solid #363636"></div><div class="t" style="left:897px;top:463px;font-weight:bold;color:#a0a0a0;letter-spacing:-0.45px">Properties</div><div class="a" style="left:953px;top:460px;width:33px;height:18px;background:#535353;border-top:1px solid #5e5e5e"></div><div class="t" style="left:960px;top:463px;font-weight:bold;color:#e6e6e6;letter-spacing:-0.45px">Info</div><div class="a" style="left:890px;top:477px;width:251px;height:1px;background:#5a5a5a"></div><svg class="ic" style="left:1122px;top:465px" width="14" height="8"><path d="M0 2H5L2.5 4.5Z" fill="#c8c8c8"/><path d="M5 0.5H14M5 2.5H14M5 4.5H14M5 6.5H14" stroke="#c8c8c8" stroke-width="1"/></svg>
<div class="a" style="left:1013px;top:482px;width:1px;height:60px;background:#3c3c3c"></div>
<div class="a" style="left:1014px;top:482px;width:1px;height:60px;background:#5e5e5e"></div>
<div class="a" style="left:890px;top:545px;width:251px;height:1px;background:#3c3c3c"></div>
<div class="a" style="left:890px;top:546px;width:251px;height:1px;background:#5e5e5e"></div>
<div class="a" style="left:1013px;top:550px;width:1px;height:28px;background:#3c3c3c"></div>
<div class="a" style="left:1014px;top:550px;width:1px;height:28px;background:#5e5e5e"></div>
<div class="a" style="left:890px;top:580px;width:251px;height:1px;background:#3c3c3c"></div>
<div class="a" style="left:890px;top:581px;width:251px;height:1px;background:#5e5e5e"></div>
<div class="a" style="left:890px;top:621px;width:251px;height:1px;background:#3c3c3c"></div>
<div class="a" style="left:890px;top:622px;width:251px;height:1px;background:#5e5e5e"></div>
<svg class="ic" style="left:898px;top:494px" width="16" height="16"><path d="M2 14L3 12L9 6L11 8L5 14Z" fill="none" stroke="#c8c8c8"/><path d="M8 5L12 9" stroke="#c8c8c8" stroke-width="2"/><circle cx="12.5" cy="3.5" r="2.5" fill="#b8b8b8"/><path d="M10 13H15L12.5 15.5Z" fill="#c8c8c8"/></svg>
<svg class="ic" style="left:1022px;top:494px" width="16" height="16"><path d="M2 14L3 12L9 6L11 8L5 14Z" fill="none" stroke="#c8c8c8"/><path d="M8 5L12 9" stroke="#c8c8c8" stroke-width="2"/><circle cx="12.5" cy="3.5" r="2.5" fill="#b8b8b8"/><path d="M10 13H15L12.5 15.5Z" fill="#c8c8c8"/></svg>
<div class="t" style="left:924px;top:486px;color:#e6e6e6;letter-spacing:0;font-weight:bold">R</div><div class="t" style="left:937px;top:486px;color:#e6e6e6;font-weight:bold">:</div>
<div class="t" style="left:924px;top:497px;color:#e6e6e6;letter-spacing:0;font-weight:bold">G</div><div class="t" style="left:937px;top:497px;color:#e6e6e6;font-weight:bold">:</div>
<div class="t" style="left:925px;top:508px;color:#e6e6e6;letter-spacing:0;font-weight:bold">B</div><div class="t" style="left:937px;top:508px;color:#e6e6e6;font-weight:bold">:</div>
<div class="t" style="left:919px;top:529px;color:#e6e6e6;letter-spacing:-0.3px">8-bit</div>
<div class="t" style="left:1048px;top:486px;color:#e6e6e6;letter-spacing:0;font-weight:bold">C</div><div class="t" style="left:1061px;top:486px;color:#e6e6e6;font-weight:bold">:</div>
<div class="t" style="left:1047px;top:497px;color:#e6e6e6;letter-spacing:0;font-weight:bold">M</div><div class="t" style="left:1061px;top:497px;color:#e6e6e6;font-weight:bold">:</div>
<div class="t" style="left:1048px;top:508px;color:#e6e6e6;letter-spacing:0;font-weight:bold">Y</div><div class="t" style="left:1061px;top:508px;color:#e6e6e6;font-weight:bold">:</div>
<div class="t" style="left:1048px;top:519px;color:#e6e6e6;letter-spacing:0;font-weight:bold">K</div><div class="t" style="left:1061px;top:519px;color:#e6e6e6;font-weight:bold">:</div>
<div class="t" style="left:1043px;top:529px;color:#e6e6e6;letter-spacing:-0.3px">8-bit</div>
<svg class="ic" style="left:896px;top:555px" width="20" height="16"><path d="M0 7.5H13M6.5 1V14" stroke="#c8c8c8"/><path d="M13 12H18L15.5 14.5Z" fill="#c8c8c8"/></svg>
<div class="t" style="left:924px;top:551px;color:#e6e6e6;letter-spacing:0;font-weight:bold">X</div><div class="t" style="left:937px;top:551px;color:#e6e6e6;font-weight:bold">:</div>
<div class="t" style="left:924px;top:562px;color:#e6e6e6;letter-spacing:0;font-weight:bold">Y</div><div class="t" style="left:937px;top:562px;color:#e6e6e6;font-weight:bold">:</div>
<svg class="ic" style="left:1020px;top:555px" width="18" height="16"><path d="M4 14.5V3.5H14.5V12" fill="none" stroke="#c8c8c8"/><path d="M14.5 12L12 9.5M14.5 12L17 9.5" stroke="#c8c8c8"/><path d="M1 14.5H4V11M6 14.5H14" stroke="#c8c8c8" stroke-dasharray="1 1"/></svg>
<div class="t" style="left:1046px;top:551px;color:#e6e6e6;letter-spacing:0;font-weight:bold">W</div><div class="t" style="left:1061px;top:551px;color:#e6e6e6;font-weight:bold">:</div>
<div class="t" style="left:1047px;top:562px;color:#e6e6e6;letter-spacing:0;font-weight:bold">H</div><div class="t" style="left:1061px;top:562px;color:#e6e6e6;font-weight:bold">:</div>
<div class="t" style="left:901px;top:591px;color:#e6e6e6;letter-spacing:-0.45px">Doc: 3,00M/3,00M</div>
<div class="t" style="left:901px;top:603px;color:#e6e6e6;letter-spacing:-0.45px">Eyedropper</div>
<div class="t" style="left:901px;top:632px;color:#e6e6e6;letter-spacing:-0.6px">Click image to choose new color</div>

<!-- CLONE SOURCE -->
<div class="a" style="left:890px;top:717px;width:251px;height:18px;background:#424242;border-top:1px solid #4a4a4a"></div>
<div class="a" style="left:890px;top:717px;width:76px;height:18px;background:#535353;border-top:1px solid #5e5e5e"></div>
<div class="t" style="left:897px;top:720px;font-weight:bold;color:#e6e6e6;letter-spacing:-0.45px">Clone Source</div>
<svg class="ic" style="left:1122px;top:722px" width="14" height="8"><path d="M0 2H5L2.5 4.5Z" fill="#c8c8c8"/><path d="M5 0.5H14M5 2.5H14M5 4.5H14M5 6.5H14" stroke="#c8c8c8" stroke-width="1"/></svg>

<!-- LAYERS / CHANNELS -->
<div class="a" style="left:1143px;top:467px;width:223px;height:249px;background:#474747"></div>
<div class="a" style="left:1143px;top:468px;width:223px;height:17px;background:#424242;border-top:1px solid #3a3a3a"></div><div class="a" style="left:1143px;top:469px;width:44px;height:16px;background:#444;border-right:1px solid #363636"></div><div class="t" style="left:1150px;top:471px;font-weight:bold;color:#a0a0a0;letter-spacing:-0.45px">Layers</div><div class="a" style="left:1187px;top:468px;width:56px;height:18px;background:#535353;border-top:1px solid #5e5e5e"></div><div class="t" style="left:1194px;top:471px;font-weight:bold;color:#e6e6e6;letter-spacing:-0.45px">Channels</div><div class="a" style="left:1243px;top:469px;width:40px;height:16px;background:#444;border-right:1px solid #363636"></div><div class="t" style="left:1250px;top:471px;font-weight:bold;color:#a0a0a0;letter-spacing:-0.45px">Paths</div><div class="a" style="left:1143px;top:485px;width:223px;height:1px;background:#5a5a5a"></div><svg class="ic" style="left:1347px;top:473px" width="14" height="8"><path d="M0 2H5L2.5 4.5Z" fill="#c8c8c8"/><path d="M5 0.5H14M5 2.5H14M5 4.5H14M5 6.5H14" stroke="#c8c8c8" stroke-width="1"/></svg>
<div class="a" style="left:1349px;top:486px;width:17px;height:230px;background:linear-gradient(90deg,#3c3c3c,#474747 70%,#424242)"></div>
<div class="a" style="left:1143px;top:487px;width:206px;height:23px;background:#5a6678"></div><div class="a" style="left:1143px;top:510px;width:206px;height:1px;background:#3d434c"></div><svg class="ic" style="left:1148px;top:492px" width="13" height="10"><path d="M0.8 5Q6.5 -0.8 12.2 5Q6.5 10.8 0.8 5Z" fill="#7a828e" stroke="#b4b4b4" stroke-width="1.3"/><circle cx="6.5" cy="5" r="2.9" fill="#3a4250"/><circle cx="7.3" cy="4" r="0.9" fill="#d0d0d0"/></svg><div class="a" style="left:1168px;top:489px;width:32px;height:19px;background:#fff;border:1px solid #101010"></div><svg class="ic" style="left:1187px;top:496px" width="5" height="4"><path d="M0.3 3.2L1.8 2L2.6 2.4L4.6 0.8" stroke="#2a3248" stroke-width="1" fill="none"/></svg><div class="t" style="left:1206px;top:491px;color:#ececec;letter-spacing:-0.9px">RGB</div><div class="t" style="left:1307px;top:491px;color:#ececec;letter-spacing:-0.7px">Ctrl+2</div><div class="a" style="left:1143px;top:511px;width:206px;height:23px;background:#5a6678"></div><div class="a" style="left:1143px;top:534px;width:206px;height:1px;background:#3d434c"></div><svg class="ic" style="left:1148px;top:516px" width="13" height="10"><path d="M0.8 5Q6.5 -0.8 12.2 5Q6.5 10.8 0.8 5Z" fill="#7a828e" stroke="#b4b4b4" stroke-width="1.3"/><circle cx="6.5" cy="5" r="2.9" fill="#3a4250"/><circle cx="7.3" cy="4" r="0.9" fill="#d0d0d0"/></svg><div class="a" style="left:1168px;top:513px;width:32px;height:19px;background:#fff;border:1px solid #101010"></div><svg class="ic" style="left:1187px;top:520px" width="5" height="4"><path d="M0.3 3.2L1.8 2L2.6 2.4L4.6 0.8" stroke="#2a3248" stroke-width="1" fill="none"/></svg><div class="t" style="left:1206px;top:515px;color:#ececec;letter-spacing:-0.9px">Red</div><div class="t" style="left:1307px;top:515px;color:#ececec;letter-spacing:-0.7px">Ctrl+3</div><div class="a" style="left:1143px;top:535px;width:206px;height:23px;background:#5a6678"></div><div class="a" style="left:1143px;top:558px;width:206px;height:1px;background:#3d434c"></div><svg class="ic" style="left:1148px;top:540px" width="13" height="10"><path d="M0.8 5Q6.5 -0.8 12.2 5Q6.5 10.8 0.8 5Z" fill="#7a828e" stroke="#b4b4b4" stroke-width="1.3"/><circle cx="6.5" cy="5" r="2.9" fill="#3a4250"/><circle cx="7.3" cy="4" r="0.9" fill="#d0d0d0"/></svg><div class="a" style="left:1168px;top:537px;width:32px;height:19px;background:#fff;border:1px solid #101010"></div><svg class="ic" style="left:1187px;top:544px" width="5" height="4"><path d="M0.3 3.2L1.8 2L2.6 2.4L4.6 0.8" stroke="#2a3248" stroke-width="1" fill="none"/></svg><div class="t" style="left:1206px;top:539px;color:#ececec;letter-spacing:-0.9px">Green</div><div class="t" style="left:1307px;top:539px;color:#ececec;letter-spacing:-0.7px">Ctrl+4</div><div class="a" style="left:1143px;top:559px;width:206px;height:23px;background:#5a6678"></div><div class="a" style="left:1143px;top:582px;width:206px;height:1px;background:#3d434c"></div><svg class="ic" style="left:1148px;top:564px" width="13" height="10"><path d="M0.8 5Q6.5 -0.8 12.2 5Q6.5 10.8 0.8 5Z" fill="#7a828e" stroke="#b4b4b4" stroke-width="1.3"/><circle cx="6.5" cy="5" r="2.9" fill="#3a4250"/><circle cx="7.3" cy="4" r="0.9" fill="#d0d0d0"/></svg><div class="a" style="left:1168px;top:561px;width:32px;height:19px;background:#fff;border:1px solid #101010"></div><svg class="ic" style="left:1187px;top:568px" width="5" height="4"><path d="M0.3 3.2L1.8 2L2.6 2.4L4.6 0.8" stroke="#2a3248" stroke-width="1" fill="none"/></svg><div class="t" style="left:1206px;top:563px;color:#ececec;letter-spacing:-0.9px">Blue</div><div class="t" style="left:1307px;top:563px;color:#ececec;letter-spacing:-0.7px">Ctrl+5</div>
<div class="a" style="left:1143px;top:717px;width:223px;height:18px;background:#535353;border-top:1px solid #5e5e5e"></div>
<svg class="ic" style="left:1235px;top:720px" width="12" height="12"><circle cx="6" cy="6" r="5" fill="none" stroke="#e0e0e0" stroke-width="1.2" stroke-dasharray="1.6 1.2"/></svg>
<svg class="ic" style="left:1264px;top:721px" width="13" height="11"><rect x="0" y="0" width="13" height="11" fill="#7a7a7a"/><circle cx="6.5" cy="5.5" r="2.6" fill="#555"/></svg>
<svg class="ic" style="left:1297px;top:721px" width="10" height="11"><path d="M0 0H10V11H4L0 7Z" fill="#c0c0c0"/><path d="M0 7H4V11Z" fill="#777"/></svg>
<svg class="ic" style="left:1324px;top:720px" width="12" height="13"><path d="M0 2.5H12M4 2.5V0.5H8V2.5" stroke="#777" fill="none"/><path d="M1.5 4H10.5V12.5H1.5Z" fill="none" stroke="#777"/><path d="M4 5.5V11M6 5.5V11M8 5.5V11" stroke="#777"/></svg>


<!-- DIALOG -->
<div class="a" style="left:865px;top:272px;width:326px;height:165px;background:#4b4948;box-shadow:0 2px 12px rgba(0,0,0,0.3)"></div>
<div class="t" style="left:869px;top:279px;font-size:12px;color:#f4f4f4;letter-spacing:-0.05px">Brightness/Contrast</div>
<svg class="ic" style="left:1170px;top:280px" width="11" height="11"><path d="M0.5 0.5L10.5 10.5M10.5 0.5L0.5 10.5" stroke="#f0f0f0" stroke-width="1.3"/></svg>
<div class="a" style="left:866px;top:298px;width:324px;height:138px;background:#eeeeee"></div>
<div class="t" style="left:881px;top:312px;font-size:12px;color:#101010;letter-spacing:-0.1px">Brightness:</div>
<div class="a" style="left:1027px;top:308px;width:55px;height:20px;background:#fff;border:1px solid #7a7a7a"></div>
<div class="t" style="left:1033px;top:312px;font-size:12px;color:#101010;letter-spacing:0">59</div>
<div class="a" style="left:882px;top:331px;width:199px;height:6px;border-radius:3px;background:linear-gradient(#b0b0b0,#d4d4d4);border:1px solid #a8a8a8"></div>
<svg class="ic" style="left:1014px;top:333px" width="13" height="11"><path d="M0.5 10.5V6L6.5 0.5L12.5 6V10.5Z" fill="#e0e0e0" stroke="#8a8a8a"/></svg>
<div class="t" style="left:881px;top:358px;font-size:12px;color:#101010;letter-spacing:-0.1px">Contrast:</div>
<div class="a" style="left:1027px;top:354px;width:55px;height:20px;background:#fff;border:1px solid #1e7fd8"></div>
<div class="a" style="left:1031px;top:357px;width:16px;height:14px;background:#0a66c8"></div>
<div class="t" style="left:1032px;top:358px;font-size:12px;color:#fff;letter-spacing:0">30</div>
<div class="a" style="left:1046px;top:357px;width:1px;height:14px;background:#e08020"></div>
<div class="a" style="left:882px;top:377px;width:199px;height:6px;border-radius:3px;background:linear-gradient(#b0b0b0,#d4d4d4);border:1px solid #a8a8a8"></div>
<svg class="ic" style="left:1005px;top:379px" width="13" height="11"><path d="M0.5 10.5V6L6.5 0.5L12.5 6V10.5Z" fill="#e0e0e0" stroke="#8a8a8a"/></svg>
<div class="a" style="left:881px;top:412px;width:13px;height:13px;background:#fff;border:1px solid #333"></div>
<div class="t" style="left:897px;top:413px;font-size:12px;color:#101010;letter-spacing:-0.1px">Use Legacy</div>
<div class="a" style="left:1103px;top:309px;width:76px;height:18px;background:#e2e2e2;border:2px solid #1f74d6"></div>
<div class="t" style="left:1132px;top:312px;font-size:12px;color:#101010;letter-spacing:0">OK</div>
<div class="a" style="left:1103px;top:344px;width:76px;height:18px;background:#e2e2e2;border:1px solid #b8b8b8"></div>
<div class="t" style="left:1122px;top:347px;font-size:12px;color:#101010;letter-spacing:-0.1px">Cancel</div>
<div class="a" style="left:1103px;top:379px;width:76px;height:18px;background:#e2e2e2;border:1px solid #b8b8b8"></div>
<div class="t" style="left:1127px;top:382px;font-size:12px;color:#101010;letter-spacing:-0.1px">Auto</div>
<div class="a" style="left:1102px;top:413px;width:13px;height:13px;background:#fff;border:1px solid #333"></div>
<svg class="ic" style="left:1103px;top:414px" width="11" height="11"><path d="M1.5 5.5L4 8.5L9.5 1.5" stroke="#222" stroke-width="1.2" fill="none"/></svg>
<div class="t" style="left:1118px;top:413px;font-size:12px;color:#101010;letter-spacing:-0.1px">Preview</div>

<!-- TASKBAR -->
<div class="a" style="left:0;top:735px;width:1366px;height:33px;background:#262524"></div>
<svg class="ic" style="left:10px;top:744px" width="17" height="16"><path d="M0 2.3L7 1.3V7.5H0ZM8 1.1L16.5 0V7.5H8ZM0 8.5H7V14.7L0 13.7ZM8 8.5H16.5V16L8 14.9Z" fill="#fff"/></svg>
<svg class="ic" style="left:45px;top:743px" width="18" height="18"><circle cx="11" cy="6.5" r="5" fill="none" stroke="#fff" stroke-width="1.4"/><path d="M7.5 10L1 16.5" stroke="#fff" stroke-width="1.5"/></svg>
<svg class="ic" style="left:81px;top:743px" width="18" height="18"><circle cx="9" cy="9" r="7" fill="none" stroke="#fff" stroke-width="2.2"/></svg>
<div class="a" style="left:114px;top:744px;width:1px;height:16px;background:#555"></div>
<div class="a" style="left:117px;top:744px;width:1px;height:16px;background:#555"></div>
<!-- edge -->
<svg class="ic" style="left:141px;top:743px" width="17" height="17"><defs><linearGradient id="eg1" x1="0" y1="0" x2="1" y2="0.3"><stop offset="0" stop-color="#1a8ad8"/><stop offset="0.55" stop-color="#3ab8e8"/><stop offset="1" stop-color="#5ad870"/></linearGradient><linearGradient id="eg2" x1="0" y1="0" x2="1" y2="1"><stop offset="0" stop-color="#1a7ad0"/><stop offset="1" stop-color="#0a4aa0"/></linearGradient></defs>
<path d="M8.5 0.5C3.5 0.5 0.5 4.5 0.5 8.5C0.5 13.5 4.5 16.5 8.5 16.5C11 16.5 13.5 15.5 15 13.5C12 15 8 14.5 7 11.5C6.5 9.5 8 8 10 8H16.5C16.5 3.5 13 0.5 8.5 0.5Z" fill="url(#eg1)"/>
<path d="M0.5 8.5C0.5 13.5 4.5 16.5 8.5 16.5C11 16.5 13.5 15.5 15 13.5C12 15 8 14.5 7 11.5C6.5 9.5 8 8 10 8C7 6 2 6 0.5 8.5Z" fill="url(#eg2)"/></svg>
<div class="a" style="left:135px;top:764px;width:19px;height:2px;background:#c8c8c4"></div>
<div class="a" style="left:154px;top:764px;width:9px;height:2px;background:#8a8a88"></div>
<!-- chrome -->
<svg class="ic" style="left:178px;top:743px" width="16" height="16"><circle cx="8" cy="8" r="7.5" fill="#db4437"/><path d="M8 8L1.5 4.3Q0 7.5 1.2 10.8Q3 14.6 7.6 15.5Z" fill="#0f9d58"/><path d="M8 8L7.6 15.5Q11.8 15.6 14.3 12Q16 8.5 14.6 4.3Z" fill="#f4c20d"/><circle cx="8" cy="8" r="3.6" fill="#fff"/><circle cx="8" cy="8" r="2.7" fill="#5a8ef0"/></svg>
<div class="a" style="left:172px;top:764px;width:28px;height:2px;background:#c8c8c4"></div>
<!-- rocket app -->
<div class="a" style="left:215px;top:743px;width:16px;height:16px;background:#1a96dc;border-radius:2px"></div>
<svg class="ic" style="left:215px;top:743px" width="16" height="16"><path d="M13 2.5Q9 3 6.5 8.5L8 10Q12.5 7.5 13.5 3Z" fill="#fff"/><path d="M6 9L3.5 9.5L5 8M7.5 10.5L7 13L8.5 11M5 11L2.5 13.5" stroke="#fff" stroke-width="1.1" fill="none"/></svg>
<!-- ps active -->
<div class="a" style="left:242px;top:735px;width:36px;height:33px;background:#383736"></div>
<div class="a" style="left:252px;top:743px;width:16px;height:16px;background:#0a0a3a;border:1px solid #7ab8f0"></div>
<div class="t" style="left:254px;top:747px;font-size:9px;font-weight:normal;color:#9ad0ff;letter-spacing:-0.2px">Ps</div>
<div class="a" style="left:242px;top:764px;width:36px;height:2px;background:#c8c8c4"></div>
<!-- ie -->
<svg class="ic" style="left:288px;top:742px" width="18" height="18"><defs><linearGradient id="ieg" x1="0" y1="0" x2="0" y2="1"><stop offset="0" stop-color="#7ad0f8"/><stop offset="1" stop-color="#1a78c8"/></linearGradient></defs>
<path d="M14.5 10.5H5.5Q6 13.5 9 13.5Q11.5 13.5 12.5 12H14.5Q13 16 9 16Q3.5 16 3 10Q3 4 9 4Q14.5 4 14.5 10.5ZM5.6 8.5H12Q11.5 6 9 6Q6.5 6 5.6 8.5Z" fill="url(#ieg)"/>
<path d="M4 9Q0 15 1 16.5Q2.5 18 7 15M8 3.5Q14.5 0 16.5 1.5Q18 3 14 8.5" fill="none" stroke="#f4c030" stroke-width="1.3"/></svg>
<!-- mail -->
<svg class="ic" style="left:326px;top:743px" width="17" height="15"><path d="M0 5L8.5 0L17 5V15H0Z" fill="#0a6cc0"/><path d="M1.5 4.5H15.5V8L8.5 12L1.5 8Z" fill="#f0f0f0"/><path d="M0 6L8.5 11L17 6V15H0Z" fill="#2aa8ec"/><path d="M0 15L8.5 9L17 15Z" fill="#48b8f8" opacity="0.6"/></svg>
<!-- office -->
<svg class="ic" style="left:364px;top:743px" width="13" height="16"><defs><linearGradient id="ofg" x1="0" y1="0" x2="1" y2="1"><stop offset="0" stop-color="#e83a2a"/><stop offset="1" stop-color="#a81020"/></linearGradient></defs><path d="M0 3.5L8.5 0L13 1.5V14.5L8.5 16L0 12.5Z" fill="url(#ofg)"/><path d="M3.5 4.5V12L8.5 13.5V2.5Z" fill="#232323"/><path d="M8.5 0L13 1.5V14.5L8.5 16Z" fill="#e04a10"/></svg>
<!-- explorer -->
<svg class="ic" style="left:400px;top:744px" width="17" height="14"><path d="M0 0.5H6L7.5 2H17V14H0Z" fill="#e8a820"/><path d="M0 4H17V14H0Z" fill="#fcd45c"/><path d="M4 9H13V14H10.5V11.5H6.5V14H4Z" fill="#2a88d8"/></svg>
<div class="a" style="left:394px;top:764px;width:28px;height:2px;background:#c8c8c4"></div>
<!-- photos -->
<svg class="ic" style="left:437px;top:744px" width="16" height="14"><rect x="2" y="2" width="12" height="10" rx="1" fill="#fff"/><rect x="3" y="3" width="10" height="8" fill="#6ab0d8"/><path d="M3 11L7 7L10 9L13 7V11Z" fill="#2a6a5a"/><path d="M0 0H3.5M0 0V3.5M16 0H12.5M16 0V3.5M0 14H3.5M0 14V10.5M16 14H12.5M16 14V10.5" stroke="#3a8ad8" stroke-width="2"/></svg>
<div class="a" style="left:431px;top:764px;width:28px;height:2px;background:#c8c8c4"></div>

<!-- tray -->
<svg class="ic" style="left:924px;top:740px" width="22" height="22"><circle cx="10" cy="10" r="9" fill="#fff"/><circle cx="10" cy="10" r="7.5" fill="#1a8ad8"/><text x="5.5" y="15" font-family="Liberation Sans" font-size="14" font-weight="bold" fill="#fff">?</text><circle cx="16" cy="16" r="5" fill="#1a8ad8" stroke="#232323"/><path d="M16 14V19M16 12.5V13" stroke="#fff" stroke-width="1.5"/></svg>
<svg class="ic" style="left:991px;top:741px" width="18" height="20"><path d="M10 1Q2 4 3 12Q5 19 14 18Q17 17 18 15Q10 15 8 9Q7 4 10 1Z" fill="#f5c518"/></svg>
<div class="t" style="left:1021px;top:746px;font-size:14px;color:#f2f2f2;letter-spacing:-0.1px">3°C</div><div class="t" style="left:1050px;top:746px;font-size:14px;color:#f2f2f2;letter-spacing:-0.2px">Sereno</div>
<svg class="ic" style="left:1101px;top:741px" width="18" height="20"><path d="M2 8L10 2L17 6L12 14L4 17Z" fill="#d8d8d8"/><path d="M4 9L10 4M6 11L12 6M8 13L14 8" stroke="#444"/><path d="M1 18L5 13M2 19L6 14" stroke="#c040c0" stroke-width="1.4"/><path d="M3 19L7 15" stroke="#30b030" stroke-width="1.4"/></svg>
<svg class="ic" style="left:1126px;top:742px" width="18" height="19"><path d="M8 0.5L15 3V9Q15 15 8 18.5Q1 15 1 9V3Z" fill="#fff"/><path d="M8 0.5V9H1V3ZM8 9H15Q15 15 8 18.5Z" fill="#232323"/><circle cx="14" cy="14" r="4.5" fill="#2cad4f"/><path d="M11.8 14L13.5 15.7L16.3 12.6" stroke="#fff" stroke-width="1.2" fill="none"/></svg>
<div class="a" style="left:1151px;top:744px;width:16px;height:16px;background:#e01a1a"></div>
<svg class="ic" style="left:1151px;top:744px" width="16" height="16"><path d="M3.5 12Q6 4 9 4.5Q11 5 12.5 11.5M4 10.5Q8 8 13 11.5" stroke="#fff" stroke-width="1.5" fill="none"/></svg>
<svg class="ic" style="left:1175px;top:745px" width="20" height="14"><path d="M0 4H4M0 9H4M4 2V11" stroke="#fff" stroke-width="1.5"/><rect x="6.5" y="2.5" width="11" height="9" fill="none" stroke="#fff" stroke-width="1.2"/><rect x="8" y="4" width="6" height="6" fill="#fff"/><rect x="17.5" y="5" width="2" height="4" fill="#fff"/></svg>
<svg class="ic" style="left:1201px;top:743px" width="18" height="17"><path d="M2 16Q2 4 16 2M5 16Q5 7 16 5.5M8 16Q8 10 16 9M11 16Q11 12.5 16 12.5" stroke="#e8e8e8" stroke-width="1.1" fill="none"/></svg>
<svg class="ic" style="left:1224px;top:744px" width="20" height="15"><path d="M0.5 4.5H4L8.5 0.5V14.5L4 10.5H0.5Z" fill="none" stroke="#f0f0f0" stroke-width="1.1"/><path d="M12 4.5L17 9.5M17 4.5L12 9.5" stroke="#f0f0f0" stroke-width="1.2"/></svg>
<div class="t" style="left:1264px;top:739px;font-size:12px;color:#e8e8e8;letter-spacing:-0.4px">00:17</div>
<div class="t" style="left:1249px;top:753px;font-size:12px;color:#e8e8e8;letter-spacing:-0.45px">09/02/2022</div><div class="a" style="left:1360px;top:735px;width:1px;height:33px;background:#5a5a5a"></div>
<svg class="ic" style="left:1325px;top:743px" width="18" height="18"><path d="M0.5 0.5H17.5V12.5H9L5 16.5V12.5H0.5Z" fill="#fff"/><path d="M3 4H15M3 7H15M3 10H11" stroke="#232323" stroke-width="1.2"/><circle cx="14" cy="13" r="3.8" fill="#232323"/><path d="M12 13Q13 11 15 12Q16 14 13.5 15" stroke="#fff" stroke-width="0.9" fill="none"/></svg>

<div id="rest"></div>
</body></html>
